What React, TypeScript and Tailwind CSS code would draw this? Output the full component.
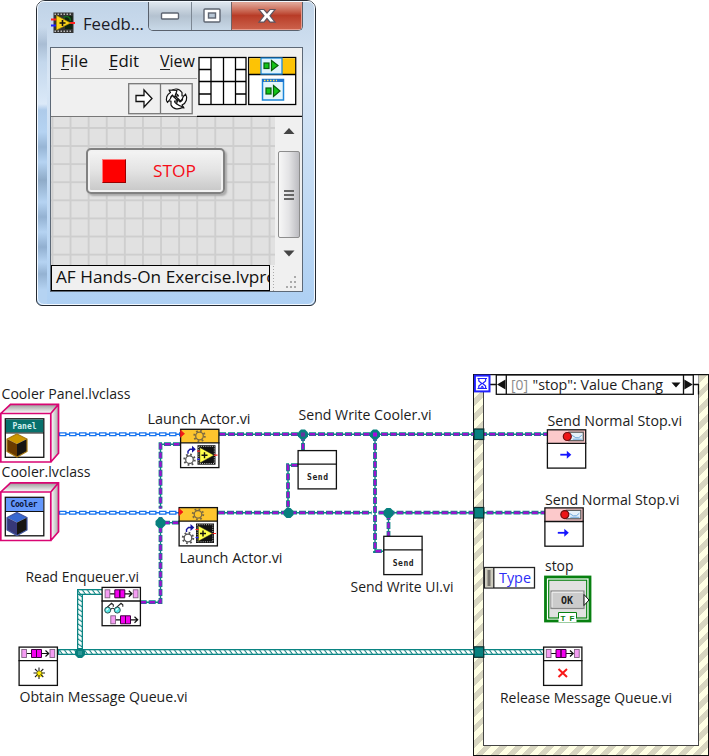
import type { ReactNode } from "react";

const FONT = "'Open Sans', 'Noto Sans', sans-serif";

type LabelProps = {
  x: number;
  y: number;
  w: number;
  text: string;
  size?: number;
  fill?: string;
};

function Label({ x, y, w, text, size = 15, fill = "#1c1c1c" }: LabelProps) {
  return (
    <text
      x={x}
      y={y}
      fontSize={size}
      fill={fill}
      fontFamily={FONT}
      textLength={w}
      lengthAdjust="spacingAndGlyphs"
    >
      {text}
    </text>
  );
}

// One line of window text, squeezed to a fixed width
function Caption({ w, text, fill = "#111", size = 16.5 }: { w: number; text: string; fill?: string; size?: number }) {
  return (
    <svg width={w} height={20} className="block shrink-0 overflow-visible">
      <Label x={0} y={15.5} w={w} text={text} size={size} fill={fill} />
    </svg>
  );
}

function MenuItem({ text, w, line }: { text: string; w: number; line: number }) {
  return (
    <svg width={w} height={22} className="block shrink-0 overflow-visible">
      <Label x={0} y={15.5} w={w} text={text} size={16.5} fill="#111" />
      <path d={`M0 18.5h${line}`} stroke="#222" />
    </svg>
  );
}

function TitleBar() {
  return (
    <div className="flex h-[45px] pl-[13px]">
      <svg width="25" height="24" viewBox="0 0 25 24" className="mt-[9px] shrink-0">
        <rect x="2.500" y="1.500" width="20" height="20.500" fill="#333" />
        <path d="M3.500 3.300h18M3.500 20.300h18" stroke="#bbb" strokeWidth="1.500" strokeDasharray="1.500 1.500" />
        <rect x="14" y="5" width="7.500" height="13" fill="#0f2410" />
        <path d="M0 8.500h7M18 12h6" stroke="#f22" strokeWidth="2" />
        <path d="M0 14.500h7" stroke="#22f" strokeWidth="2" />
        <path d="M5.500 4.500l14 7.500-14 7z" fill="#fcd51a" stroke="#a48505" strokeWidth=".700" />
        <path d="M8.500 12h6M11.500 9v6" stroke="#111" strokeWidth="1.600" />
        <path d="M12.500 6.500c4-2.500 7 0 7 3.500" stroke="#17681d" fill="none" strokeWidth="1.500" />
      </svg>
      <div className="ml-[7px] mt-[12px] w-[65px]">
        <Caption w={61} text="Feedb..." fill="#1c1c28" />
      </div>
      <div className="flex h-[29px] w-[155px] overflow-hidden rounded-b-[5px] border border-t-0 border-[#59616d]">
        <div className="flex w-[43px] items-center justify-center border-r border-[#7c8793] bg-linear-to-b from-[#dfe7ef] via-[#b4c2d0] via-50% to-[#c9d9e8]">
          <svg width="20" height="10">
            <rect x="1.500" y="2" width="17" height="6" rx="1" fill="#fff" stroke="#5e6572" strokeWidth="1.400" />
          </svg>
        </div>
        <div className="flex w-[40px] items-center justify-center border-r border-[#6f6266] bg-linear-to-b from-[#dfe7ef] via-[#b4c2d0] via-50% to-[#c9d9e8]">
          <svg width="18" height="16">
            <rect x="1" y="1" width="16" height="13" rx="1" fill="#fff" stroke="#5e6572" strokeWidth="1.400" />
            <rect x="5.500" y="5" width="7" height="5" fill="#b8c7d6" stroke="#5e6572" strokeWidth="1.400" />
          </svg>
        </div>
        <div className="flex flex-1 items-center justify-center border-r border-b border-[#e69a8b] bg-linear-to-b from-[#dfa394] from-5% via-[#b83c27] via-50% to-[#cb604a]">
          <svg width="20" height="16">
            <path
              d="M2 1.500h5l3 3.600 3-3.600h5l-5 6.300 5 6.300h-5l-3-3.600-3 3.600H2l5-6.300z"
              fill="#fff"
              stroke="#5f5560"
              strokeWidth="1.200"
            />
          </svg>
        </div>
      </div>
    </div>
  );
}

// Connector pane and VI icon in the top right corner
function PaneIcons() {
  return (
    <svg width="105" height="69" viewBox="197 48 105 69" className="shrink-0">
      <g fill="#fff" stroke="#000" strokeWidth="1.300">
        <rect x="199" y="57.500" width="47" height="47" />
        <path d="M211 57v48M223.500 57v48M235.500 57v48M199 69.500h12M199 81.500h47M199 94h12M235.500 69.500H246M235.500 94H246" />
        <rect x="248.700" y="57.500" width="47" height="47" />
      </g>
      <path d="M249.400 58.200h45.700v15.800h-45.700z" fill="#fdc305" />
      <path d="M248 74.500h48" stroke="#000" strokeWidth="1.300" />
      <rect x="261" y="58" width="21" height="16" fill="#dff3fb" stroke="#1c87d8" strokeWidth="1.300" />
      <rect x="262.500" y="79.500" width="21" height="20.500" fill="#e6f5fb" stroke="#1c87d8" strokeWidth="1.500" />
      <path d="M262 80.500h22" stroke="#1f74ce" strokeWidth="3" />
      <path d="M264 80.500h13" stroke="#ffe24c" strokeWidth="1.300" strokeDasharray="1.500 1.500" />
      <g fill="#12c518" stroke="#075f0b" strokeWidth="1.200">
        <rect x="264" y="63" width="5" height="5.500" />
        <path d="M271.500 60.500l6.500 5-6.500 5z" />
        <rect x="266" y="88" width="5" height="6" />
        <path d="M273.500 85.500l6.500 5.500-6.500 5.500z" />
      </g>
      <path d="M197 116.500h105" stroke="#000" strokeWidth="1.400" />
    </svg>
  );
}

function Toolbar() {
  return (
    <div className="flex h-[69px] bg-[#f0f0f0]">
      <div className="flex w-[146px] shrink-0 flex-col">
        <div className="flex h-[31px] gap-[21px] border-b border-[#a2a2a2] pl-[10px] pt-[3px]">
          <MenuItem text="File" w={27} line={8} />
          <MenuItem text="Edit" w={30} line={8} />
          <MenuItem text="View" w={35} line={10} />
        </div>
        <div className="flex h-[38px] border-b border-[#777] pl-[77px] pt-[4px]">
          <svg width="66" height="32" viewBox="0 0 66 32">
            <rect x=".700" y=".700" width="63.500" height="30" fill="#f0f0f0" stroke="#777" strokeWidth="1.300" />
            <path d="M32.500 1v30" stroke="#777" strokeWidth="1.300" />
            <path d="M8 12.500h8V7l8 8.500-8 8.500v-5.500H8z" fill="#fff" stroke="#111" strokeWidth="1.300" />
            <g fill="#fff" stroke="#111" strokeWidth="1.200" strokeLinejoin="round">
              <path d="M42 8.500c4-3.500 9-3.500 12 1V13h3.500l-5 5-5.500-5h3.500c-1-2.500-4-3.500-8.500-4.500z" />
              <path d="M57.500 11c2.500 4 1 9-3.500 11l2 3-8.500-1 2.500-8 2 3c2-1 3-2 2.500-4z" />
              <path d="M55 24c-4 3-10 2.500-12-2v-4h-4l5.500-5.500L50 18h-3.500c0 2.500 3 4 8.500 6z" />
              <path d="M39.500 19.500c-2.500-4-.500-8 3-10l-1.500-2.500 8 .500-2.500 7-2-2.500c-1.500 1-2 2-2 3.500z" />
            </g>
          </svg>
        </div>
      </div>
      <PaneIcons />
    </div>
  );
}

function ScrollBar() {
  return (
    <div className="flex w-[27px] flex-col items-center bg-[#f0f0f0]">
      <svg width="12" height="34" viewBox="0 0 12 34">
        <path d="M.500 17l5.500-6 5.500 6z" fill="#444" />
      </svg>
      <div className="flex h-[87px] w-[22px] flex-col items-center justify-center gap-[2px] rounded-[2px] border border-[#8d8d8d] bg-linear-to-r from-[#f7f7f7] via-[#e3e3e5] to-[#bcbcc1]">
        <div className="h-[2px] w-[10px] bg-[#666]" />
        <div className="h-[2px] w-[10px] bg-[#666]" />
        <div className="h-[2px] w-[10px] bg-[#666]" />
      </div>
      <svg width="12" height="27" viewBox="0 0 12 27">
        <path d="M.500 12.500h11l-5.500 6z" fill="#444" />
      </svg>
    </div>
  );
}

function FrontPanel() {
  return (
    <div className="ml-[36px] h-[306px] w-[280px] rounded-t-[9px] rounded-b-[6px] border-[1.500px] border-[#252b33] bg-linear-to-b from-[#c0d3e7] via-[#d8e6f5] via-25% to-[#aed0f3]">
      <div className="h-full rounded-[7px] border border-[#f3f9ff] bg-[linear-gradient(to_bottom,transparent_25px,#a9bdd4_42px,#c3d7ec_60px,#dbe9f8_102px,#aecbea_108px,#b5d3f2_130px,#97b5d5_145px,#b5d3f2_160px,#8fabc8_178px,#b5d3f2_200px,#94b2d2_215px,#b5d3f2_230px,#91afd0_245px,#b5d3f2_260px,#94b2d2_272px,#b5d3f2_288px)] bg-size-[9px_100%] bg-no-repeat">
        <TitleBar />
        <div className="ml-[12px] h-[245px] w-[253px] border border-[#5d6977]">
          <Toolbar />
          <div className="flex h-[148px]">
            <div className="w-[224px] bg-[#e1e1e1] bg-[linear-gradient(to_right,#cecece_2px,transparent_2px),linear-gradient(to_bottom,#cecece_2px,transparent_2px)] bg-size-[18.100px_18.100px] bg-position-[0.500px_10px] pl-[35px] pt-[31px]">
              <div className="flex h-[46px] w-[139px] items-center rounded-[5px] border-2 border-[#818181] bg-linear-to-b from-[#f5f5f5] via-[#e3e3e3] via-50% to-[#c7c7c7] pl-[14px] shadow-[2px_2px_2px_#aaa,inset_0_0_0_2px_#f2f2f2]">
                <div className="h-[24px] w-[24px] border border-t-[#f77] border-l-[#f77] border-r-[#900] border-b-[#900] bg-[#fe0000]" />
                <div className="ml-[27px]">
                  <Caption w={43} text="STOP" fill="#f50d18" />
                </div>
              </div>
            </div>
            <ScrollBar />
          </div>
          <div className="flex h-[26px] bg-[#f0f0f0]">
            <div className="h-[26px] w-[219px] overflow-hidden border-[1.500px] border-black pl-[4px] pt-px">
              <Caption w={225} text="AF Hands-On Exercise.lvproj" />
            </div>
            <svg width="30" height="26" viewBox="0 0 30 26">
              <path d="M3.500 1v25" stroke="#aaa" strokeDasharray="1 2" />
              <path d="M24 12h2M20 17h2M24 17h2M16 22h2M20 22h2M24 22h2" stroke="#aaa" strokeWidth="2" />
            </svg>
          </div>
        </div>
      </div>
    </div>
  );
}

// Object wire: teal casing with purple dashes
function ActorWire({ d }: { d: string }) {
  return (
    <g fill="none">
      <path d={d} stroke="#0b8583" strokeWidth="1.400" />
      <path d={d} stroke="#0b8583" strokeWidth="3.800" strokeDasharray="7 2" />
      <path d={d} stroke="#9a13cf" strokeWidth="2.400" strokeDasharray="5.500 3.500" strokeDashoffset="-.700" />
    </g>
  );
}

function ClassWire({ d }: { d: string }) {
  return (
    <g fill="none">
      <path d={d} stroke="#1673ef" strokeWidth="1.500" />
      <path d={d} stroke="#1673ef" strokeWidth="4" strokeDasharray="7.500 2.500" />
      <path d={d} stroke="#fff" strokeWidth="1.500" strokeDasharray="5 5" strokeDashoffset="-1.200" />
    </g>
  );
}

function QueueWire({ x, y, w, h }: { x: number; y: number; w: number; h: number }) {
  return (
    <g>
      <rect x={x} y={y} width={w} height={h} fill="#0b8583" />
      {w > h ? (
        <rect x={x + 1.3} y={y + 1.3} width={w - 1.3} height={h - 2.600} fill="url(#hatch)" />
      ) : (
        <rect x={x + 1.3} y={y + 1.3} width={w - 2.600} height={h - 1.3} fill="url(#hatchV)" />
      )}
    </g>
  );
}

function Junction({ x, y, core }: { x: number; y: number; core?: string }) {
  return (
    <g>
      <path d={`M${x - 2} ${y - 5}h4l3 3v4l-3 3h-4l-3-3v-4z`} fill="#07807e" />
      {core && <rect x={x - 2} y={y - 2} width="4" height="4" fill={core} />}
    </g>
  );
}

function Node({ x, y, head = "#fff", children }: { x: number; y: number; head?: string; children?: ReactNode }) {
  return (
    <g transform={`translate(${x} ${y})`}>
      <rect x=".600" y=".600" width="38.300" height="38.300" fill="#fff" />
      <rect x=".600" y=".600" width="38.300" height="13.600" fill={head} />
      <rect x=".600" y=".600" width="38.300" height="38.300" fill="none" stroke="#111" strokeWidth="1.300" />
      <path d="M0 14.200h39.500" stroke="#111" strokeWidth="1.300" />
      {children}
    </g>
  );
}

function Gear({ x, y, stroke }: { x: number; y: number; stroke: string }) {
  return (
    <g transform={`translate(${x} ${y})`} fill="none" stroke={stroke}>
      <circle r="5.200" strokeWidth="2" strokeDasharray="1.700 2.384" />
      <circle r="3.800" strokeWidth="1.300" />
    </g>
  );
}

function LaunchNode({ x, y }: { x: number; y: number }) {
  return (
    <Node x={x} y={y} head="#fdc52e">
      <path d="M.500 1.500l4 3.500-4 3.500z" fill="#f21818" stroke="#f21818" strokeWidth=".700" />
      <Gear x={19.500} y={7.300} stroke="#7c6a42" />
      <Gear x={9.500} y={31} stroke="#555" />
      <path d="M8 25v-2.500l2-2h3" fill="none" stroke="#1515a0" strokeWidth="1.400" />
      <path d="M12 17l3.800 3.500L12 24z" fill="#1515a0" />
      <rect x="17.500" y="16.500" width="18" height="19.500" fill="#111" />
      <rect x="18.700" y="17.700" width="15.600" height="17.100" fill="none" stroke="#bbb" strokeWidth="1" strokeDasharray="1 1.200" />
      <path d="M19.800 18.800l14.200 7.700-14.200 7.700z" fill="#ffff4c" stroke="#222" strokeWidth=".500" />
      <path d="M21.500 26.500h6M24.500 23.500v6" stroke="#111" strokeWidth="1.400" />
      <path d="M17 22.500h3M34 26.500h3.500" stroke="#f22" strokeWidth="1.200" />
      <path d="M17 30.500h3" stroke="#22f" strokeWidth="1.200" />
    </Node>
  );
}

function SendNode({ x, y }: { x: number; y: number }) {
  return (
    <Node x={x} y={y}>
      <text x="9.500" y="30" fontSize="8" fontWeight="700" fontFamily="'DejaVu Sans Mono', monospace" fill="#222" textLength="21">
        Send
      </text>
    </Node>
  );
}

function StopNode({ x, y }: { x: number; y: number }) {
  return (
    <Node x={x} y={y} head="#fcc9cb">
      <rect x="22" y="3" width="14.500" height="8.500" fill="#e6f1fa" stroke="#555" strokeWidth="1.200" />
      <path d="M25 6l4 2.500h3l3-2.500M26 10h9" stroke="#71a9dc" fill="none" />
      <circle cx="20.500" cy="7.300" r="4" fill="#ee1518" stroke="#6d0f10" strokeWidth="1.200" />
      <path d="M13.500 25.500h9" stroke="#1515ff" strokeWidth="1.800" />
      <path d="M20 21.500l4.500 4-4.500 4z" fill="#1515ff" />
    </Node>
  );
}

function QueueGlyph({ x, y, tail = true }: { x: number; y: number; tail?: boolean }) {
  return (
    <g transform={`translate(${x} ${y})`}>
      <path d="M5 4.500h5M20 4.500h7.500M24 1.500l3.200 3-3.200 3" fill="none" stroke="#111" strokeWidth="1.200" />
      <rect x=".300" y=".500" width="4.700" height="8" fill="#f59cf3" stroke="#806080" strokeWidth=".900" />
      <path d="M10 .500h5v8h-5zM15 .500h5v8h-5z" fill="#f400f0" stroke="#400040" strokeWidth="1" />
      {tail && <rect x="28.500" y=".500" width="4.700" height="8" fill="#f59cf3" stroke="#806080" strokeWidth=".900" />}
    </g>
  );
}

type CubeProps = {
  y: number;
  name: string;
  nameX: number;
  nameW: number;
  band: string;
  ink: string;
  top: string;
  left: string;
  edge: string;
};

function ClassCube({ y, name, nameX, nameW, band, ink, top, left, edge }: CubeProps) {
  return (
    <g transform={`translate(0 ${y})`}>
      <path d="M.800 10L10.500 .800h48L50.800 10z" fill="url(#cube)" />
      <path d="M50.800 10l7.700-9v49l-7.700 9z" fill="url(#cubeSide)" />
      <path d="M.800 10h50v48.500H.800z" fill="#fff" />
      <path d="M.800 10L10.500 .800h48v49l-7.700 8.700M50.800 10l7.700-9.200M.800 10h50v48.500H.800z" fill="none" stroke="#d90673" strokeWidth="1.700" />
      <rect x="5.300" y="15.300" width="38.500" height="38.500" fill="#fff" stroke="#111" strokeWidth="1.300" />
      <rect x="6" y="16" width="37.200" height="13" fill={band} />
      <path d="M5 29.500h39" stroke="#111" strokeWidth="1.200" />
      <text x={nameX} y="25.300" fontSize="8" fontWeight="700" fontFamily="'DejaVu Sans Mono', monospace" fill={ink} textLength={nameW}>
        {name}
      </text>
      <path d="M17 30.500l10 5-10 5-10-5z" fill={top} />
      <path d="M7 35.500l10 5v13l-10-5.500z" fill={left} />
      <path d="M27 35.500l-10 5v13l10-5.500z" fill="#171513" />
      <path d="M17 30.500l10 5V48l-10 5.500L7 48V35.500z" fill="none" stroke={edge} strokeWidth="1.200" />
    </g>
  );
}

function EventFrame() {
  return (
    <div className="absolute left-[473px] top-[68px] h-[382px] w-[236px] border-[1.500px] border-[#111] bg-[repeating-linear-gradient(135deg,#ffffe4_0px,#ffffe4_5.500px,#d8d6c1_5.500px,#d8d6c1_11px)] px-[9px] pb-[9px]">
      <div className="h-full border-[1.500px] border-t-0 border-[#444] bg-white" />
    </div>
  );
}

function Diagram() {
  return (
    <div className="relative h-[450px] w-[709px]">
      <EventFrame />
      <svg width="709" height="450" viewBox="0 306 709 450" className="absolute inset-0">
        <defs>
          <linearGradient id="cube" x1="0" y1="0" x2="0" y2="1">
            <stop offset="0" stopColor="#999" />
            <stop offset="1" stopColor="#fff" />
          </linearGradient>
          <linearGradient id="cubeSide">
            <stop offset="0" stopColor="#fff" />
            <stop offset="1" stopColor="#aaa" />
          </linearGradient>
          <pattern id="hatch" width="5" height="8" patternUnits="userSpaceOnUse" patternTransform="skewX(35)">
            <rect width="3.700" height="8" fill="#fff" />
          </pattern>
          <pattern id="hatchV" width="8" height="5" patternUnits="userSpaceOnUse" patternTransform="skewY(35)">
            <rect width="8" height="3.700" fill="#fff" />
          </pattern>
        </defs>

        <ClassWire d="M59 434.200H180" />
        <ClassWire d="M59 512.700H179" />
        <ActorWire d="M219 434.200H547" />
        <ActorWire d="M218 512.700H371.500" />
        <ActorWire d="M378.500 512.700H545" />
        <ActorWire d="M180 444.200H160.500V508.500" />
        <ActorWire d="M179 522.700H160.500" />
        <ActorWire d="M160.500 517V602.200H141" />
        <ActorWire d="M303 434V450" />
        <ActorWire d="M298 465.200H288V513" />
        <ActorWire d="M375 434V551.200H384" />
        <ActorWire d="M388.500 513V536" />
        <Junction x={160.500} y={523} />
        <Junction x={303} y={434.500} core="#64349f" />
        <Junction x={375} y={434.500} core="#a80bdd" />
        <Junction x={288.500} y={513} />
        <Junction x={388.500} y={513} />

        <QueueWire x={58} y={649} w={486} h={6} />
        <QueueWire x={77} y={589} w={6} h={62} />
        <QueueWire x={77} y={589} w={25} h={6} />
        <Junction x={80} y={653} core="#2b9896" />

        <ClassCube
          y={403.500}
          name="Panel"
          nameX={12.500}
          nameW={24}
          band="#08716d"
          ink="#d5f0ee"
          top="#cd9700"
          left="#6b3b00"
          edge="#a77a14"
        />
        <ClassCube
          y={482}
          name="Cooler"
          nameX={10.500}
          nameW={27}
          band="#6497fb"
          ink="#0b1438"
          top="#3768d0"
          left="#373879"
          edge="#4255a0"
        />
        <LaunchNode x={180} y={428.700} />
        <LaunchNode x={178.500} y={507} />
        <SendNode x={297.500} y={450} />
        <SendNode x={383.200} y={535.700} />
        <Node x={101.500} y={586.800}>
          <QueueGlyph x={3.300} y={2.500} />
          <QueueGlyph x={9} y={28.500} tail={false} />
          <path d="M4.500 21.500l5.500-5 1.800 1.500v2M14 21.500l5.500-5 1.800 1.500v2M9 23c1-2 3-2 4.500 0" fill="none" stroke="#222" strokeWidth="1.100" />
          <circle cx="6.200" cy="23.300" r="3" fill="#55e4e3" stroke="#244" strokeWidth=".900" />
          <circle cx="15.800" cy="23.300" r="3" fill="#55e4e3" stroke="#244" strokeWidth=".900" />
          <path d="M4.800 23.500l2-2M14.400 23.500l2-2" stroke="#fff" strokeWidth="1.200" />
        </Node>
        <Node x={18.500} y={646.500}>
          <QueueGlyph x={3} y={2.500} />
          <circle cx="21" cy="27.500" r="3.200" fill="#ffec00" />
          <path d="M20.500 21v4M20.500 28.500v4M15 26.500h4M22.500 26.500h4M16.500 22.500l2.700 2.700M24.800 22.500l-2.700 2.700M16.500 30.500l2.700-2.700M24.800 30.500l-2.700-2.700" stroke="#222" strokeWidth="1.100" />
        </Node>
        <StopNode x={546.800} y={429.200} />
        <StopNode x={544.300} y={507.300} />
        <Node x={543} y={646.500}>
          <QueueGlyph x={3} y={2.500} />
          <path d="M15.500 22.500l8.500 8M24 22.500l-8.500 8" stroke="#f81818" strokeWidth="2" />
        </Node>

        {[429, 507.500, 646.800].map((y) => (
          <rect key={y} x="474" y={y} width="9.800" height="10.500" fill="#07807e" stroke="#0b2e2e" strokeWidth="1.200" />
        ))}

        {/* event selector */}
        <path d="M484.500 374.800h214v9.500h-214z" fill="#fff" />
        <path d="M473.500 374.700h235M484 384.500h214.500v10" fill="none" stroke="#111" strokeWidth="1.300" />
        <rect x="496.300" y="375" width="197" height="19.300" fill="#fff" stroke="#111" strokeWidth="1.300" />
        <path d="M506.300 375v19M683.500 375v19" stroke="#111" strokeWidth="1.300" />
        <path d="M505.500 379.500v10l-8.500-5zM684.300 379.500v10l8.500-5zM671.500 382.500h9l-4.500 5z" fill="#111" />
        <Label x={511} y={390} w={17} text="[0]" fill="#8b8b8b" />
        <Label x={532.500} y={390} w={130.500} text={'"stop": Value Chang'} />
        <rect x="474.900" y="375.600" width="14.600" height="15.800" fill="#fff" stroke="#2020ff" strokeWidth="2" />
        <path
          d="M477.500 378.500h9.500M477.500 388.500h9.500M478.800 379v2l3 2.500-3 2.500v2.500M485.600 379v2l-3 2.500 3 2.500v2.500"
          fill="none"
          stroke="#2020ff"
          strokeWidth="1.200"
        />
        <path d="M480 387.800l2.200-2.200 2.200 2.200z" fill="#2020ff" />

        {/* event data terminal */}
        <rect x="484.500" y="567.500" width="50" height="20.500" fill="#fff" stroke="#222" strokeWidth="1.300" />
        <rect x="485.200" y="568.200" width="7.800" height="19" fill="#cdcbbd" />
        <rect x="487.500" y="570" width="3" height="16" fill="#77756f" />
        <path d="M493.800 567v21" stroke="#222" strokeWidth="1.300" />
        <Label x={499} y={583} w={32} text="Type" fill="#2d2df6" />

        {/* stop terminal */}
        <rect x="545.500" y="577" width="44.500" height="44" fill="#fff" stroke="#078010" strokeWidth="2.800" />
        <rect x="548.700" y="580.200" width="38" height="37.800" fill="#e1e1e1" stroke="#078010" strokeWidth="1.200" />
        <rect x="551" y="591" width="33" height="17.500" fill="#cbcbcb" stroke="#888" strokeWidth="1.200" />
        <path d="M552 607.300V592.200h31" stroke="#f5f5f5" fill="none" />
        <text
          x="561"
          y="604"
          fontSize="10"
          fontWeight="700"
          fontFamily="'DejaVu Sans Mono', monospace"
          fill="#222"
          textLength="12"
          lengthAdjust="spacingAndGlyphs"
        >
          OK
        </text>
        <path d="M584 594.500l5 5.500-5 5.500z" fill="#fff" stroke="#111" />
        <path d="M558.500 622v-9.500h18v9.500z" fill="#fff" />
        <path d="M558.500 618.500v-6h18v6" fill="none" stroke="#078010" />
        <text x="560.500" y="620.500" fontSize="8" fontWeight="700" fontFamily="'Liberation Sans', sans-serif" fill="#078010" textLength="14">
          TF
        </text>

        <Label x={1.500} y={399} w={129} text="Cooler Panel.lvclass" />
        <Label x={1.500} y={477} w={89} text="Cooler.lvclass" />
        <Label x={147.500} y={423.500} w={103} text="Launch Actor.vi" />
        <Label x={179.500} y={562.500} w={103} text="Launch Actor.vi" />
        <Label x={298.500} y={420} w={133} text="Send Write Cooler.vi" />
        <Label x={350.500} y={591.500} w={103} text="Send Write UI.vi" />
        <Label x={25.500} y={582} w={113.500} text="Read Enqueuer.vi" />
        <Label x={19.500} y={702} w={168} text="Obtain Message Queue.vi" />
        <Label x={547.500} y={426} w={134.500} text="Send Normal Stop.vi" />
        <Label x={545} y={504.500} w={134.500} text="Send Normal Stop.vi" />
        <Label x={545} y={570.500} w={28.500} text="stop" />
        <Label x={500} y={702.500} w={172} text="Release Message Queue.vi" />
      </svg>
    </div>
  );
}

export default function App() {
  return (
    <main className="h-[756px] w-[709px] overflow-hidden bg-white">
      <FrontPanel />
      <Diagram />
    </main>
  );
}
